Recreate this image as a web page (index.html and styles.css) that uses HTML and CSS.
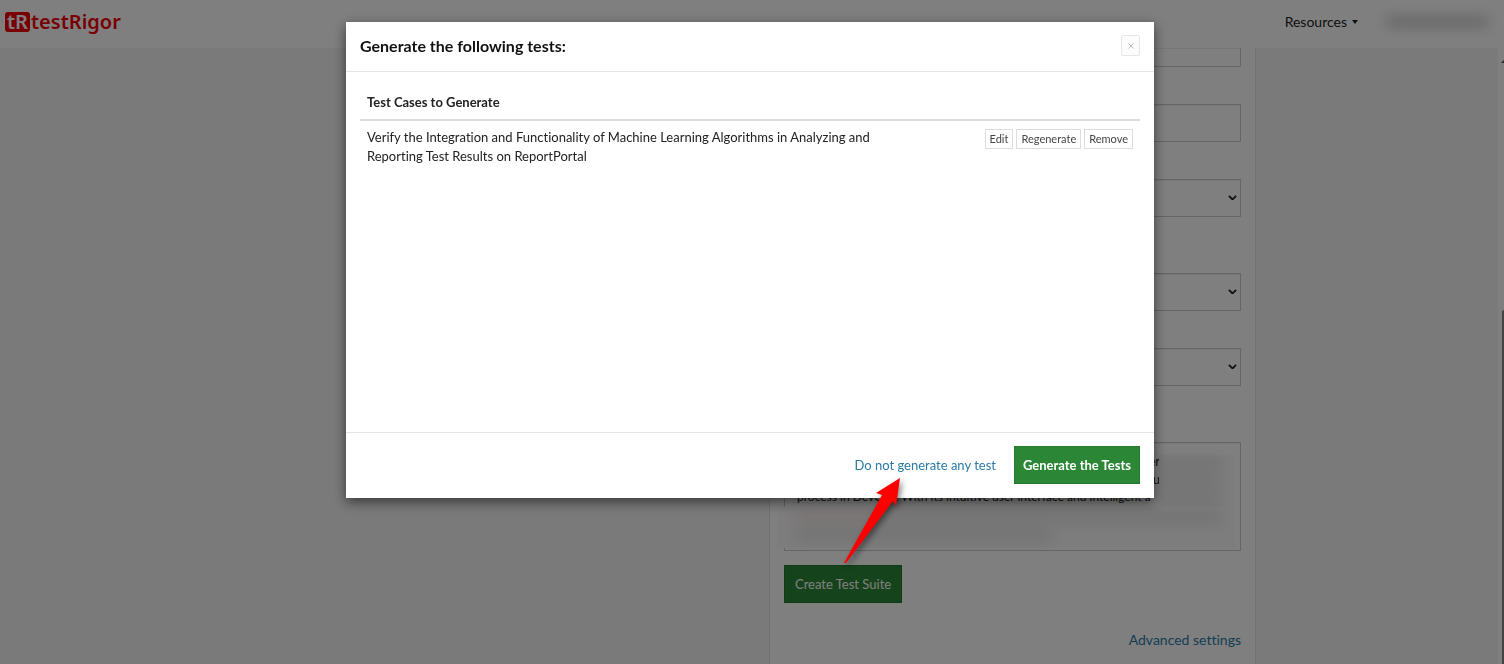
FILE: index.html
```html
<!DOCTYPE html>
<html lang="en">
<head>
<meta charset="utf-8">
<title>testRigor</title>
<link rel="stylesheet" href="styles.css">
</head>
<body>
<div class="page">
  <header class="navbar">
    <a class="logo" href="#" aria-label="testRigor"><span class="logo-mark">tR</span><span class="logo-name">testRigor</span></a>
    <nav class="nav">
      <button class="nav-item" type="button">Resources <span class="caret"></span></button>
      <span class="account"><span class="smudge"></span></span>
    </nav>
  </header>
  <main class="content">
    <form class="panel">
      <input class="field field-cut" type="text" aria-label="Suite name">
      <input class="field" type="text" aria-label="Address">
      <div class="select-wrap gap-large"><select class="field" aria-label="Type"><option></option></select><svg class="chevron" viewBox="0 0 10 6"><path d="M1 1l4 4 4-4"/></svg></div>
      <div class="select-wrap"><select class="field" aria-label="Platform"><option></option></select><svg class="chevron" viewBox="0 0 10 6"><path d="M1 1l4 4 4-4"/></svg></div>
      <div class="select-wrap gap-large"><select class="field" aria-label="Browser"><option></option></select><svg class="chevron" viewBox="0 0 10 6"><path d="M1 1l4 4 4-4"/></svg></div>
      <div class="description">
        <textarea class="field area" aria-label="Description" spellcheck="false">


process in DevOps. With its intuitive user interface and intelligent a</textarea>
        <span class="fragment" aria-hidden="true">er<br>u</span>
        <div class="veil veil-side"><span class="smudge"></span><span class="smudge"></span><span class="smudge"></span></div>
        <div class="veil veil-bottom"><span class="smudge smudge-red"></span><span class="smudge smudge-short"></span></div>
      </div>
      <button class="btn" type="button">Create Test Suite</button>
      <a class="advanced" href="#">Advanced settings</a>
    </form>
  </main>
  <div class="scrollbar"><span class="scroll-up"></span><span class="scroll-thumb"></span></div>
</div>
<div class="overlay">
  <section class="modal" role="dialog" aria-modal="true" aria-labelledby="modal-title">
    <header class="modal-header">
      <h1 class="modal-title" id="modal-title">Generate the following tests:</h1>
      <button class="close" type="button" aria-label="Close"><svg viewBox="0 0 6 6"><path d="M0.5 0.5l5 5M5.5 0.5l-5 5"/></svg></button>
    </header>
    <div class="modal-body">
      <table class="cases">
        <thead><tr><th colspan="2">Test Cases to Generate</th></tr></thead>
        <tbody><tr>
          <td class="case">Verify the Integration and Functionality of Machine Learning Algorithms in Analyzing and Reporting Test Results on ReportPortal</td>
          <td class="actions"><div class="action-row"><button class="mini" type="button">Edit</button><button class="mini" type="button">Regenerate</button><button class="mini" type="button">Remove</button></div></td>
        </tr></tbody>
      </table>
    </div>
    <footer class="modal-footer">
      <a class="skip" href="#">Do not generate any test</a>
      <button class="btn btn-strong" type="button">Generate the Tests</button>
    </footer>
    <svg class="pointer" viewBox="0 0 60 92"><path d="M58 2L34 17L40 19L2 87L4 87L51 25L54 30Z"/></svg>
  </section>
</div>
</body>
</html>
```
FILE: styles.css
```css
* { box-sizing: border-box; }
body { margin: 0; background: #f5f5f5; color: #222; font: 13px/19px Lato, sans-serif; font-variant-ligatures: none; }
button, input, select, textarea { font: inherit; font-variant-ligatures: none; color: inherit; }
button { cursor: pointer; }
a { color: #2a7ba5; text-decoration: none; }

.page { position: relative; display: flex; flex-direction: column; height: 100vh; overflow: hidden; }
.navbar { display: flex; flex: none; justify-content: space-between; align-items: center; height: 48px; padding: 0 16px 5px 5px; background: #fff; }
.logo { display: flex; align-items: center; gap: 1px; color: #f00008; font: 600 20px/22px "Noto Sans", sans-serif; }
.logo-mark { display: flex; align-items: center; justify-content: center; width: 25px; height: 20px; border-radius: 3px; background: #f00008; color: #fff; }
.nav { display: flex; align-items: center; gap: 28px; }
.nav-item { display: flex; align-items: center; gap: 5px; padding: 0; border: 0; background: none; font-size: 14px; }
.caret { border: 3px solid transparent; border-top: 4px solid #222; border-bottom: 0; }
.account { width: 102px; }
.smudge { display: block; height: 8px; background: #555; opacity: 0.4; filter: blur(7px); }

.content { flex: 1; display: flex; justify-content: flex-end; min-height: 0; padding-right: 248px; overflow: hidden; }
.panel { display: flex; flex: none; flex-direction: column; align-items: stretch; gap: 37px; width: 487px; padding: 0 14px; border: solid #e4e4e4; border-width: 0 1px; background: #fff; }
.field { display: block; flex: none; width: 100%; height: 38px; padding: 6px 12px; border: 1px solid #ccc; border-radius: 0; background: #fff; box-shadow: inset 0 1px 1px #eee; appearance: none; }
.field-cut { height: 19px; border-top: 0; }
.select-wrap { position: relative; }
.gap-large { margin-bottom: 19px; }
.chevron { position: absolute; right: 4px; top: 16px; width: 9px; fill: none; stroke: #222; stroke-width: 2; }
.description { position: relative; margin-bottom: -23px; }
.area { height: 109px; padding: 9px 12px; font-size: 12px; line-height: 18px; resize: none; overflow: hidden; white-space: pre; }
.fragment { position: absolute; top: 10px; right: 81px; line-height: 18px; text-align: right; }
.veil { position: absolute; background: #fafafa; }
.veil-side { top: 13px; right: 6px; width: 76px; height: 52px; padding: 4px 14px 0 0; }
.veil-side .smudge { margin-bottom: 10px; opacity: 0.18; }
.veil-bottom { top: 65px; right: 6px; left: -6px; height: 41px; padding: 6px 14px 0 18px; }
.veil-bottom .smudge { margin-bottom: 10px; opacity: 0.18; }
.smudge-red { background: linear-gradient(90deg, #d55 0 20%, #555 20%); }
.smudge-short { width: 60%; }
.btn { align-self: flex-start; height: 38px; padding: 0 10px; border: 1px solid #24792e; background: #2b8636; color: #fff; white-space: nowrap; }
.btn-strong { padding: 0 8px; font-weight: bold; }
.advanced { align-self: flex-end; margin-top: -10px; font-size: 14px; }
.scrollbar { position: absolute; inset: 48px 0 0 auto; width: 6px; background: #fff; }
.scroll-up { position: absolute; top: 12px; right: 0; border: solid transparent; border-width: 0 0 3px 3px; border-bottom-color: #555; }
.scroll-thumb { position: absolute; right: 0; top: 262px; bottom: 0; width: 2px; border-radius: 2px 0 0 0; background: #888; }

.overlay { position: fixed; inset: 0; padding: 22px 4px 0 0; background: rgba(0, 0, 0, 0.5); }
.modal { position: relative; width: 808px; max-width: 100%; margin: 0 auto; background: #fff; box-shadow: 0 4px 12px rgba(0, 0, 0, 0.55); }
.modal-header { display: flex; justify-content: space-between; align-items: center; padding: 13px 14px 15px; border-bottom: 1px solid #e5e5e5; }
.modal-title { margin: 0; color: #111; font-size: 16px; line-height: 21px; }
.close { display: flex; align-items: center; justify-content: center; width: 19px; height: 21px; padding: 0; border: 1px solid #e5e5e5; border-radius: 2px; background: #fcfcfc; }
.close svg { width: 6px; fill: none; stroke: #bbb; }
.modal-body { min-height: 360px; padding: 14px; }
.cases { width: 100%; border-collapse: collapse; }
.cases th { padding: 7px; border-bottom: 2px solid #ddd; text-align: left; }
.cases td { padding: 7px; vertical-align: top; }
.cases .case { padding-right: 40px; }
.actions { width: 200px; }
.action-row { display: flex; justify-content: flex-end; gap: 3px; padding-top: 1px; }
.mini { height: 20px; padding: 0 4px; border: 1px solid #ddd; background: #fff; color: #444; font-size: 11px; line-height: 16px; }
.modal-footer { display: flex; justify-content: flex-end; align-items: center; gap: 18px; padding: 13px 14px 14px; border-top: 1px solid #e5e5e5; }
.pointer { position: absolute; left: 496px; top: 454px; width: 60px; height: 92px; overflow: visible; fill: #f00; filter: drop-shadow(2px 3px 3px rgba(0, 0, 0, 0.5)); pointer-events: none; }
```
